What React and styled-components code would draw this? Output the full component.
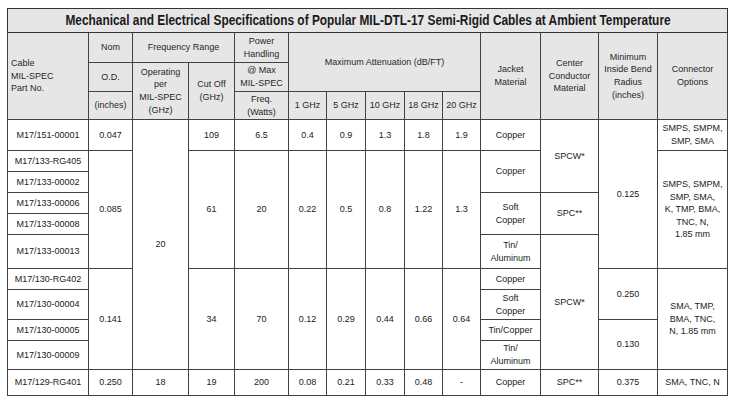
import React from "react";
import styled, { createGlobalStyle } from "styled-components";

const GlobalStyle = createGlobalStyle`
  body {
    margin: 0;
    background: #ffffff;
    font-family: "Liberation Sans", Arial, sans-serif;
  }
`;

const Page = styled.div`
  padding: 8px 0 0 7px;
`;

const Table = styled.table`
  border-collapse: collapse;
  table-layout: fixed;
  width: 721px;
  border: 1px solid #2a2a2a;
  font-size: 9px;
  line-height: 12.6px;
  color: #222222;
`;

const Row = styled.tr`
  height: ${(props) => props.$h}px;
`;

const TitleCell = styled.th`
  background: #e6e6e6;
  border: 1px solid #333333;
  padding: 0;
  text-align: center;
  vertical-align: middle;
  font-size: 14.5px;
  font-weight: bold;
  color: #1a1a1a;
  white-space: nowrap;
  overflow: hidden;
`;

const TitleText = styled.span`
  display: inline-block;
  margin: 0 -30px;
  transform: scaleX(0.82);
  transform-origin: center;
`;

const HeadCell = styled.th`
  background: #e6e6e6;
  border: 1px solid #424242;
  padding: 0 2px;
  font-weight: normal;
  text-align: ${(props) => (props.$left ? "left" : "center")};
  padding-left: ${(props) => (props.$left ? "3px" : "2px")};
  vertical-align: middle;
  color: #262626;
`;

const Cell = styled.td`
  border: 1px solid #424242;
  padding: 0 2px;
  text-align: center;
  vertical-align: middle;
`;

const widths = [81, 44, 56, 46, 54, 38, 39, 39, 38, 38, 60, 58, 59, 70];

const App = () => {
  return (
    <Page>
      <GlobalStyle />
      <Table>
        <colgroup>
          {widths.map((w, i) => (
            <col key={i} style={{ width: w }} />
          ))}
        </colgroup>
        <thead>
          <Row $h={24}>
            <TitleCell colSpan={14}>
              <TitleText>
                Mechanical and Electrical Specifications of Popular MIL-DTL-17 Semi-Rigid Cables at Ambient Temperature
              </TitleText>
            </TitleCell>
          </Row>
          <Row $h={30}>
            <HeadCell rowSpan={3} $left>
              Cable
              <br />
              MIL-SPEC
              <br />
              Part No.
            </HeadCell>
            <HeadCell>Nom</HeadCell>
            <HeadCell colSpan={2}>Frequency Range</HeadCell>
            <HeadCell>
              Power
              <br />
              Handling
            </HeadCell>
            <HeadCell colSpan={5} rowSpan={2}>
              Maximum Attenuation (dB/FT)
            </HeadCell>
            <HeadCell rowSpan={3}>
              Jacket
              <br />
              Material
            </HeadCell>
            <HeadCell rowSpan={3}>
              Center
              <br />
              Conductor
              <br />
              Material
            </HeadCell>
            <HeadCell rowSpan={3}>
              Minimum
              <br />
              Inside Bend
              <br />
              Radius
              <br />
              (inches)
            </HeadCell>
            <HeadCell rowSpan={3}>
              Connector
              <br />
              Options
            </HeadCell>
          </Row>
          <Row $h={29}>
            <HeadCell>O.D.</HeadCell>
            <HeadCell rowSpan={2}>
              Operating
              <br />
              per
              <br />
              MIL-SPEC
              <br />
              (GHz)
            </HeadCell>
            <HeadCell rowSpan={2}>
              Cut Off
              <br />
              (GHz)
            </HeadCell>
            <HeadCell>
              @ Max
              <br />
              MIL-SPEC
            </HeadCell>
          </Row>
          <Row $h={28}>
            <HeadCell>(inches)</HeadCell>
            <HeadCell>
              Freq.
              <br />
              (Watts)
            </HeadCell>
            <HeadCell>1 GHz</HeadCell>
            <HeadCell>5 GHz</HeadCell>
            <HeadCell>10 GHz</HeadCell>
            <HeadCell>18 GHz</HeadCell>
            <HeadCell>20 GHz</HeadCell>
          </Row>
        </thead>
        <tbody>
          <Row $h={31}>
            <Cell>M17/151-00001</Cell>
            <Cell>0.047</Cell>
            <Cell rowSpan={10}>20</Cell>
            <Cell>109</Cell>
            <Cell>6.5</Cell>
            <Cell>0.4</Cell>
            <Cell>0.9</Cell>
            <Cell>1.3</Cell>
            <Cell>1.8</Cell>
            <Cell>1.9</Cell>
            <Cell>Copper</Cell>
            <Cell rowSpan={3}>SPCW*</Cell>
            <Cell rowSpan={6}>0.125</Cell>
            <Cell>
              SMPS, SMPM,
              <br />
              SMP, SMA
            </Cell>
          </Row>
          <Row $h={21}>
            <Cell>M17/133-RG405</Cell>
            <Cell rowSpan={5}>0.085</Cell>
            <Cell rowSpan={5}>61</Cell>
            <Cell rowSpan={5}>20</Cell>
            <Cell rowSpan={5}>0.22</Cell>
            <Cell rowSpan={5}>0.5</Cell>
            <Cell rowSpan={5}>0.8</Cell>
            <Cell rowSpan={5}>1.22</Cell>
            <Cell rowSpan={5}>1.3</Cell>
            <Cell rowSpan={2}>Copper</Cell>
            <Cell rowSpan={5}>
              SMPS, SMPM,
              <br />
              SMP, SMA,
              <br />
              K, TMP, BMA,
              <br />
              TNC, N,
              <br />
              1.85 mm
            </Cell>
          </Row>
          <Row $h={21}>
            <Cell>M17/133-00002</Cell>
          </Row>
          <Row $h={21}>
            <Cell>M17/133-00006</Cell>
            <Cell rowSpan={2}>
              Soft
              <br />
              Copper
            </Cell>
            <Cell rowSpan={2}>SPC**</Cell>
          </Row>
          <Row $h={21}>
            <Cell>M17/133-00008</Cell>
          </Row>
          <Row $h={34}>
            <Cell>M17/133-00013</Cell>
            <Cell>
              Tin/
              <br />
              Aluminum
            </Cell>
            <Cell rowSpan={5}>SPCW*</Cell>
          </Row>
          <Row $h={21}>
            <Cell>M17/130-RG402</Cell>
            <Cell rowSpan={4}>0.141</Cell>
            <Cell rowSpan={4}>34</Cell>
            <Cell rowSpan={4}>70</Cell>
            <Cell rowSpan={4}>0.12</Cell>
            <Cell rowSpan={4}>0.29</Cell>
            <Cell rowSpan={4}>0.44</Cell>
            <Cell rowSpan={4}>0.66</Cell>
            <Cell rowSpan={4}>0.64</Cell>
            <Cell>Copper</Cell>
            <Cell rowSpan={2}>0.250</Cell>
            <Cell rowSpan={4}>
              SMA, TMP,
              <br />
              BMA, TNC,
              <br />
              N, 1.85 mm
            </Cell>
          </Row>
          <Row $h={30}>
            <Cell>M17/130-00004</Cell>
            <Cell>
              Soft
              <br />
              Copper
            </Cell>
          </Row>
          <Row $h={21}>
            <Cell>M17/130-00005</Cell>
            <Cell>Tin/Copper</Cell>
            <Cell rowSpan={2}>0.130</Cell>
          </Row>
          <Row $h={29}>
            <Cell>M17/130-00009</Cell>
            <Cell>
              Tin/
              <br />
              Aluminum
            </Cell>
          </Row>
          <Row $h={26}>
            <Cell>M17/129-RG401</Cell>
            <Cell>0.250</Cell>
            <Cell>18</Cell>
            <Cell>19</Cell>
            <Cell>200</Cell>
            <Cell>0.08</Cell>
            <Cell>0.21</Cell>
            <Cell>0.33</Cell>
            <Cell>0.48</Cell>
            <Cell>-</Cell>
            <Cell>Copper</Cell>
            <Cell>SPC**</Cell>
            <Cell>0.375</Cell>
            <Cell>SMA, TNC, N</Cell>
          </Row>
        </tbody>
      </Table>
    </Page>
  );
};

export default App;
